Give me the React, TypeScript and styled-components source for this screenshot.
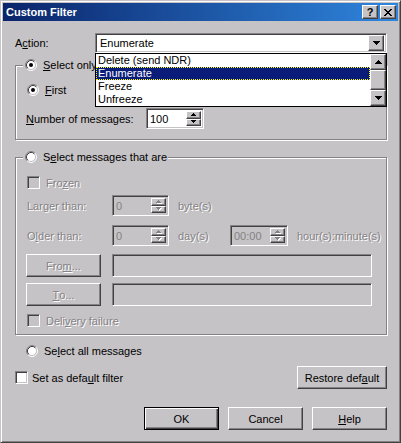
import React from "react";
import styled, {createGlobalStyle, css} from "styled-components";

const FACE = "#c6c3c6";
const SHADOW = "#848284";
const DARK = "#424142";

const GlobalStyle = createGlobalStyle`
  body {
    margin: 0;
    background: ${FACE};
    font-family: "Liberation Sans", Arial, sans-serif;
    font-size: 11px;
    color: #000;
  }
`;

const raised = css`
  border: 1px solid;
  border-color: #fff ${DARK} ${DARK} #fff;
  box-shadow: inset -1px -1px 0 ${SHADOW};
  background: ${FACE};
`;

const sunken = css`
  border: 1px solid;
  border-color: ${SHADOW} #fff #fff ${SHADOW};
  box-shadow: inset 1px 1px 0 ${DARK}, inset -1px -1px 0 ${FACE};
`;

const disabledText = css`
  color: ${SHADOW};
  text-shadow: 1px 1px 0 #fff;
`;

const Window = styled.div`
  box-sizing: border-box;
  width: 401px;
  height: 443px;
  padding: 2px;
  border: 1px solid;
  border-color: ${FACE} ${DARK} ${DARK} ${FACE};
  box-shadow: inset 1px 1px 0 #fff, inset -1px -1px 0 ${SHADOW};
  background: ${FACE};
`;

const TitleBar = styled.div`
  display: flex;
  align-items: center;
  height: 18px;
  padding: 0 2px 0 3px;
  background: linear-gradient(90deg, #0a246a, #2f86de);
`;

const Title = styled.span`
  flex: 1;
  color: #fff;
  font-weight: bold;
`;

const CaptionButton = styled.div`
  ${raised};
  box-sizing: border-box;
  width: 16px;
  height: 14px;
  display: flex;
  align-items: center;
  justify-content: center;
  font-weight: bold;
  line-height: 12px;
  & + & {
    margin-left: 2px;
  }
`;

const Body = styled.div`
  display: flex;
  flex-direction: column;
  padding: 12px 11px 0 12px;
`;

const ActionRow = styled.div`
  position: relative;
  display: flex;
  align-items: center;
  height: 20px;
`;

const Combo = styled.div`
  ${sunken};
  box-sizing: border-box;
  flex: 1;
  height: 20px;
  padding: 2px;
  display: flex;
  align-items: center;
  background: #fff;
`;

const ComboText = styled.span`
  flex: 1;
  padding-left: 2px;
`;

const ArrowButton = styled.div<{$h: number}>`
  ${raised};
  box-sizing: border-box;
  width: 16px;
  height: ${(p) => p.$h}px;
  display: flex;
  align-items: center;
  justify-content: center;
`;

const DropList = styled.div`
  position: absolute;
  z-index: 2;
  top: 20px;
  left: 80px;
  right: 0;
  box-sizing: border-box;
  height: 54px;
  border: 1px solid #000;
  background: #fff;
  display: flex;
`;

const ListItems = styled.div`
  flex: 1;
`;

const ListItem = styled.div<{$selected?: boolean}>`
  height: 13px;
  line-height: 13px;
  padding-left: 2px;
  ${(p) =>
    p.$selected &&
    css`
      background: #0a1c7a;
      color: #fff;
      outline: 1px dotted #ffff00;
      outline-offset: -1px;
    `}
`;

const ScrollBar = styled.div`
  width: 16px;
  display: flex;
  flex-direction: column;
`;

const ScrollThumb = styled.div`
  ${raised};
  flex: 1;
`;

const GroupBox = styled.div<{$top: number; $bottom: number}>`
  margin-top: ${(p) => p.$top}px;
  padding: 0 14px ${(p) => p.$bottom}px 10px;
  border: 1px solid ${SHADOW};
  box-shadow: 1px 1px 0 #fff, inset 1px 1px 0 #fff;
  display: flex;
  flex-direction: column;
`;

const Legend = styled.div`
  align-self: flex-start;
  display: flex;
  align-items: center;
  gap: 6px;
  height: 14px;
  margin: -8px 0 0 -3px;
  padding: 0 1px 0 2px;
  background: ${FACE};
`;

const Row = styled.div<{$gap: number; $h: number; $indent?: number}>`
  display: flex;
  align-items: center;
  height: ${(p) => p.$h}px;
  margin-top: ${(p) => p.$gap}px;
  padding-left: ${(p) => p.$indent ?? 0}px;
`;

const Option = styled.label`
  display: flex;
  align-items: center;
  gap: 6px;
`;

const Text = styled.span<{$disabled?: boolean; $width?: number}>`
  white-space: nowrap;
  ${(p) => p.$width && css`width: ${p.$width}px; flex-shrink: 0;`}
  ${(p) => p.$disabled && disabledText}
`;

const CheckBox = styled.span<{$disabled?: boolean}>`
  ${sunken};
  box-sizing: border-box;
  width: 13px;
  height: 13px;
  flex-shrink: 0;
  background: ${(p) => (p.$disabled ? FACE : "#fff")};
`;

const SpinField = styled.div<{$width: number; $disabled?: boolean}>`
  ${sunken};
  box-sizing: border-box;
  width: ${(p) => p.$width}px;
  height: 21px;
  padding: 2px;
  display: flex;
  flex-shrink: 0;
  background: ${(p) => (p.$disabled ? FACE : "#fff")};
`;

const SpinValue = styled.span<{$disabled?: boolean}>`
  flex: 1;
  padding-left: 1px;
  line-height: 16px;
  ${(p) => p.$disabled && `color: ${SHADOW};`}
`;

const SpinButtons = styled.div`
  width: 15px;
  display: flex;
  flex-direction: column;
`;

const SpinButton = styled.div`
  ${raised};
  flex: 1;
  display: flex;
  align-items: center;
  justify-content: center;
`;

const TextField = styled.div`
  ${sunken};
  box-sizing: border-box;
  width: 260px;
  height: 23px;
  margin-left: 11px;
  background: ${FACE};
`;

const Unit = styled.span<{$width?: number}>`
  ${disabledText};
  white-space: nowrap;
  margin-left: 9px;
  ${(p) => p.$width && css`width: ${p.$width}px; flex-shrink: 0;`}
`;

const PushButton = styled.div<{$width: number; $default?: boolean; $disabled?: boolean}>`
  box-sizing: border-box;
  width: ${(p) => p.$width}px;
  height: 23px;
  flex-shrink: 0;
  display: flex;
  align-items: center;
  justify-content: center;
  background: ${FACE};
  ${(p) =>
    p.$default
      ? css`
          border: 1px solid #000;
          box-shadow: inset 1px 1px 0 #fff, inset -1px -1px 0 ${DARK}, inset -2px -2px 0 ${SHADOW};
        `
      : raised}
  ${(p) => p.$disabled && disabledText}
`;

const BottomRow = styled.div<{$gap: number; $justify: string}>`
  display: flex;
  align-items: center;
  justify-content: ${(p) => p.$justify};
  gap: 9px;
  height: 23px;
  margin-top: ${(p) => p.$gap}px;
`;

const DefaultOption = styled(Option)`
  gap: 4px;
`;

const Radio: React.FC<{checked?: boolean}> = ({checked}) => (
  <svg width="12" height="12" viewBox="0 0 12 12" style={{flexShrink: 0}}>
    <circle cx="6" cy="6" r="4.5" fill="#fff"/>
    <path d="M2.11 9.89A5.5 5.5 0 0 1 9.89 2.11" fill="none" stroke={SHADOW}/>
    <path d="M9.89 2.11A5.5 5.5 0 0 1 2.11 9.89" fill="none" stroke="#fff"/>
    <path d="M2.82 9.18A4.5 4.5 0 0 1 9.18 2.82" fill="none" stroke={DARK}/>
    <path d="M9.18 2.82A4.5 4.5 0 0 1 2.82 9.18" fill="none" stroke={FACE}/>
    {checked && <circle cx="6" cy="6" r="2" fill="#000"/>}
  </svg>
);

const ArrowDown: React.FC = () => (
  <svg width="7" height="4" viewBox="0 0 7 4">
    <path d="M0 0h7v1H0zM1 1h5v1H1zM2 2h3v1H2zM3 3h1v1H3z" fill="#000"/>
  </svg>
);

const ArrowUp: React.FC = () => (
  <svg width="7" height="4" viewBox="0 0 7 4">
    <path d="M3 0h1v1H3zM2 1h3v1H2zM1 2h5v1H1zM0 3h7v1H0z" fill="#000"/>
  </svg>
);

const TinyArrow: React.FC<{up?: boolean; disabled?: boolean}> = ({up, disabled}) => {
  const d = up ? "M2 0h1v1H2zM1 1h3v1H1zM0 2h5v1H0z" : "M0 0h5v1H0zM1 1h3v1H1zM2 2h1v1H2z";
  return (
    <svg width="6" height="4" viewBox="0 0 6 4">
      {disabled && <path d={d} fill="#fff" transform="translate(1 1)"/>}
      <path d={d} fill={disabled ? SHADOW : "#000"}/>
    </svg>
  );
};

const CloseGlyph: React.FC = () => (
  <svg width="8" height="7" viewBox="0 0 8 7">
    <path
      d="M0 0h2v1H0zM6 0h2v1H6zM1 1h2v1H1zM5 1h2v1H5zM2 2h4v1H2zM3 3h2v1H3zM2 4h4v1H2zM1 5h2v1H1zM5 5h2v1H5zM0 6h2v1H0zM6 6h2v1H6z"
      fill="#000"
    />
  </svg>
);

const Spin: React.FC<{value: string; width: number; disabled?: boolean}> = ({value, width, disabled}) => (
  <SpinField $width={width} $disabled={disabled}>
    <SpinValue $disabled={disabled}>{value}</SpinValue>
    <SpinButtons>
      <SpinButton><TinyArrow up disabled={disabled}/></SpinButton>
      <SpinButton><TinyArrow disabled={disabled}/></SpinButton>
    </SpinButtons>
  </SpinField>
);

const actions = ["Delete (send NDR)", "Enumerate", "Freeze", "Unfreeze"];

const App: React.FC = () => {
  return (
    <>
      <GlobalStyle/>
      <Window>
        <TitleBar>
          <Title>Custom Filter</Title>
          <CaptionButton>?</CaptionButton>
          <CaptionButton><CloseGlyph/></CaptionButton>
        </TitleBar>
        <Body>
          <ActionRow>
            <Text $width={80}>A<u>c</u>tion:</Text>
            <Combo>
              <ComboText>Enumerate</ComboText>
              <ArrowButton $h={16}><ArrowDown/></ArrowButton>
            </Combo>
            <DropList>
              <ListItems>
                {actions.map((a) => (
                  <ListItem key={a} $selected={a === "Enumerate"}>{a}</ListItem>
                ))}
              </ListItems>
              <ScrollBar>
                <ArrowButton $h={16}><ArrowUp/></ArrowButton>
                <ScrollThumb/>
                <ArrowButton $h={16}><ArrowDown/></ArrowButton>
              </ScrollBar>
            </DropList>
          </ActionRow>

          <GroupBox $top={12} $bottom={10}>
            <Legend>
              <Radio checked/>
              <Text><u>S</u>elect only</Text>
            </Legend>
            <Row $gap={11} $h={14} $indent={1}>
              <Option>
                <Radio checked/>
                <Text><u>F</u>irst</Text>
              </Option>
            </Row>
            <Row $gap={11} $h={21}>
              <Text $width={120}><u>N</u>umber of messages:</Text>
              <Spin value="100" width={58}/>
            </Row>
          </GroupBox>

          <GroupBox $top={17} $bottom={7}>
            <Legend>
              <Radio/>
              <Text>S<u>e</u>lect messages that are</Text>
            </Legend>
            <Row $gap={12} $h={13} $indent={1}>
              <Option>
                <CheckBox $disabled/>
                <Text $disabled>Fro<u>z</u>en</Text>
              </Option>
            </Row>
            <Row $gap={6} $h={21} $indent={1}>
              <Text $disabled $width={85}>Lar<u>g</u>er than:</Text>
              <Spin value="0" width={57} disabled/>
              <Unit>byte(s)</Unit>
            </Row>
            <Row $gap={9} $h={21} $indent={1}>
              <Text $disabled $width={85}>O<u>l</u>der than:</Text>
              <Spin value="0" width={57} disabled/>
              <Unit $width={52}>day(s)</Unit>
              <Spin value="00:00" width={58} disabled/>
              <Unit>hour(s):minute(s)</Unit>
            </Row>
            <Row $gap={8} $h={23}>
              <PushButton $width={75} $disabled>Fro<u>m</u>...</PushButton>
              <TextField/>
            </Row>
            <Row $gap={6} $h={23}>
              <PushButton $width={75} $disabled><u>T</u>o...</PushButton>
              <TextField/>
            </Row>
            <Row $gap={8} $h={13} $indent={1}>
              <Option>
                <CheckBox $disabled/>
                <Text $disabled>Deli<u>v</u>ery failure</Text>
              </Option>
            </Row>
          </GroupBox>

          <Row $gap={9} $h={14} $indent={11}>
            <Option>
              <Radio/>
              <Text>Se<u>l</u>ect all messages</Text>
            </Option>
          </Row>

          <BottomRow $gap={8} $justify="space-between">
            <DefaultOption>
              <CheckBox/>
              <Text>Set as defa<u>u</u>lt filter</Text>
            </DefaultOption>
            <PushButton $width={90}>Restore def<u>a</u>ult</PushButton>
          </BottomRow>

          <BottomRow $gap={18} $justify="flex-end">
            <PushButton $width={75} $default>OK</PushButton>
            <PushButton $width={75}>Cancel</PushButton>
            <PushButton $width={75}><u>H</u>elp</PushButton>
          </BottomRow>
        </Body>
      </Window>
    </>
  );
};

export default App;
